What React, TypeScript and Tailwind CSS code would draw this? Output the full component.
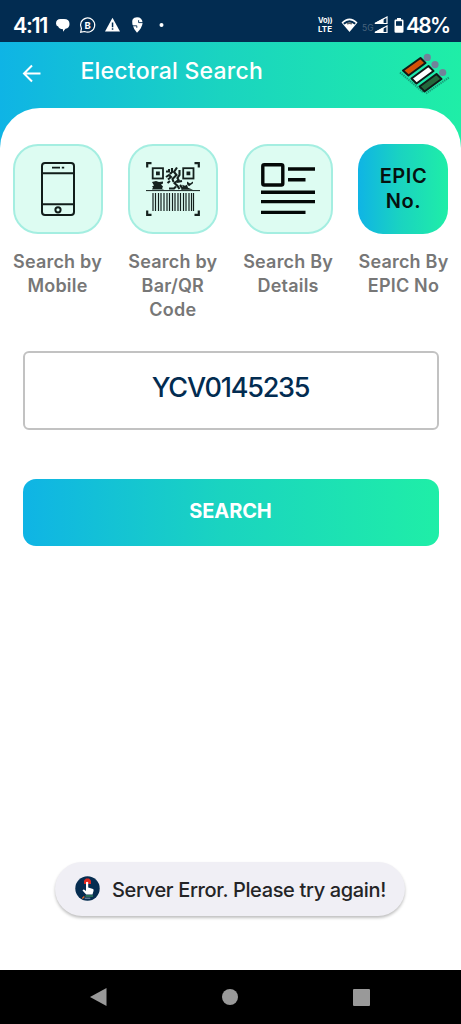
import React from 'react';

function Battery() {
  return (
    <svg width="10" height="15" viewBox="0 0 10 15">
      <path d="M3 0h4v1.5h1.2q1.3 0 1.3 1.3v10.7q0 1.3-1.3 1.3H1.8Q.5 14.8.5 13.5V2.8q0-1.3 1.3-1.3H3z" fill="white" />
      <path d="M2 3.2h6v4.6H2z" fill="#022c51" />
    </svg>
  );
}

function StatusBar() {
  return (
    <div className="flex h-[42px] shrink-0 items-start justify-between bg-[#022c51] pl-[13px] pr-[12px] pt-[15px] text-white">
      <div className="flex h-[20px] items-center">
        <span className="mt-px w-[43px] whitespace-nowrap text-[21.5px] font-semibold leading-none tracking-[-1.3px]">4:11</span>
        <svg className="-mt-px" width="109" height="20" viewBox="0 0 109 20" fill="white">
          {/* chat */}
          <path d="M0 8.5Q0 4 4.5 4H8q5.5 0 5.5 5 0 4-4 4.8L7 16.8v-2.5Q3.2 14 2.2 11.4 0 11 0 8.5z" />
          {/* business */}
          <path d="M24.7 17.2l.7-3.7a7.1 7.1 0 1 1 3.2 3z" fill="none" stroke="white" strokeWidth="1.2" />
          <text x="31.6" y="13.6" fontSize="9.5" fontWeight="700" textAnchor="middle">B</text>
          {/* warning */}
          <path d="M56.5 2.8L64 16.5H49z" />
          <path d="M55.8 7.5h1.5v4.8h-1.5zM55.8 13.3h1.5v1.5h-1.5z" fill="#022c51" />
          {/* delivery */}
          <path d="M81 17.8q-3.5-4-4.6-8.6Q75 2.2 81 2.2q5.3 0 5.6 5.8-.5 5-5.6 9.8z" />
          <path d="M87 7.6h-4.4V5.2M76 10.8h4.8v2" fill="none" stroke="#022c51" strokeWidth=".9" />
          <circle cx="105.5" cy="10" r="2" />
        </svg>
      </div>
      <div className="flex h-[20px] items-center">
        <div className="flex w-[23px] flex-col text-[8px] font-bold leading-[8px]">
          <span className="whitespace-nowrap text-[7.5px] tracking-[-0.2px]">Vo))</span>
          <span>LTE</span>
        </div>
        <svg width="17" height="15" viewBox="0 0 17 15">
          <path d="M.5 4.5Q8.5-3.5 16.5 4.5L8.5 14z" fill="white" />
          <path d="M2.2 4.9Q8.5-.6 14.8 4.9l-1.2 1.6Q8.5 2.4 3.4 6.5z" fill="#022c51" />
          <path d="M6 6q2.5-1.6 5 0" fill="none" stroke="#666" strokeWidth="1.4" />
        </svg>
        <span className="ml-[4px] mt-[7px] w-[12px] text-[8.5px] leading-none text-[#49647d]">5G</span>
        <svg width="14" height="18" viewBox="0 0 14 18" fill="none" stroke="white" strokeWidth="1.2">
          <path d="M1 7.5L13 1v6.5z" />
          <path d="M1 7.5L9 3.3v4.2z" fill="white" />
          <path d="M1 16.5L13 10v6.5z" />
          <path d="M1 16.5L9 12.3v4.2z" fill="white" />
        </svg>
        <div className="ml-[6px]"><Battery /></div>
        <span className="ml-[2px] w-[43px] whitespace-nowrap text-[21px] font-semibold leading-none tracking-[-1.7px]">48%</span>
      </div>
    </div>
  );
}

function VoteLogo() {
  return (
    <svg width="52" height="42" viewBox="0 0 52 42">
      <g fill="#71839a">
        <circle cx="28.3" cy="4.4" r="3.6" />
        <circle cx="36" cy="11.6" r="3.6" />
        <circle cx="43.7" cy="19.5" r="3.6" />
      </g>
      <g stroke="#101a18" strokeWidth="2" strokeLinejoin="round">
        <path d="M4 17.5L21.5 5L26.5 10L9.5 22.5z" fill="#d35108" />
        <path d="M12.5 25.5L29.5 13L34.5 18L17.5 30.5z" fill="#fff" />
        <path d="M20.5 33.5L37.5 21L42.5 26L25.5 38.5z" fill="#23683c" />
      </g>
      <path d="M1 19.5L24 39M27 40.5L50 24.5" stroke="#157c62" strokeWidth="2" strokeDasharray="1.4 .8" opacity=".7" fill="none" />
    </svg>
  );
}

function MobileIcon() {
  return (
    <svg width="34" height="54" viewBox="0 0 34 54" fill="none" stroke="#111d1a" strokeWidth="2">
      <rect x="1" y="1" width="32" height="52" rx="3" />
      <path d="M1 11.2h32M1 42.3h32" />
      <path d="M11 5.6h8M20.8 5.6h2.4" strokeWidth="1.8" />
      <circle cx="17" cy="47.8" r="2.6" />
    </svg>
  );
}

function ScanIcon() {
  return (
    <svg width="54" height="54" viewBox="0 0 54 54" fill="none" stroke="#15211e">
      <path d="M1.2 5.5V1.2H5.5M48.5 1.2h4.3V5.5M1.2 48.5v4.3H5.5M48.5 52.8h4.3V48.5" strokeWidth="2.2" />
      <rect x="6.7" y="6.2" width="10.3" height="10.3" strokeWidth="1.8" />
      <rect x="37.2" y="6.2" width="10.3" height="10.3" strokeWidth="1.8" />
      <path d="M10 9.5h3.8v3.8H10zM40.5 9.5h3.8v3.8h-3.8z" fill="#15211e" stroke="none" />
      <path
        d="M20 9.5h3V7M20 15l3-2 2 2-3 2.5M26 6v4l-2 2M31 5.5l-3 4.5 2.5 3-4 4 1 3M33.5 8v5l-2 3 1 2-4 3 3 3 2 3M31 20l5-1M24 19l-2.5 2M23 26.5h5l2-2M34 23l3 4"
        strokeWidth="2.1"
      />
      <path d="M6 20l4-1 3 1 4-.5v2l-2 1 2 2-1 2 2 1H6l1-2-1-1 2-1zM35 27.7l2-3-1-2 3 1 2-1 1 3 5 2zM41 19.5l3 2 3-2v1.8l-4 3-2-2z" fill="#15211e" stroke="none" />
      <path d="M0 28.6h54" strokeWidth="1" />
      <path
        d="M7 31v18M9.5 31v18M12.5 31v18M15 31v18M18 31v18M21 31v18M23.5 31v18M26.5 31v18M29 31v18M32 31v18M34.5 31v18M37.5 31v18M40 31v18M43 31v18M45.5 31v18M47.5 31v18"
        strokeWidth="1.2"
      />
    </svg>
  );
}

function DetailsIcon() {
  return (
    <svg width="54" height="52" viewBox="0 0 54 52" fill="none" stroke="#030807" strokeWidth="3.4">
      <rect x="1.8" y="1.8" width="20" height="20.2" rx="1.5" />
      <path d="M27 6h27M27 16.8h17.5M0 29.3h54M0 38.6h54M0 49.4h44.5" />
    </svg>
  );
}

const options = [
  { lines: ['Search by', 'Mobile'], icon: <MobileIcon /> },
  { lines: ['Search by', 'Bar/QR', 'Code'], icon: <ScanIcon /> },
  { lines: ['Search By', 'Details'], icon: <DetailsIcon /> },
  { lines: ['Search By', 'EPIC No'], icon: null },
];

export default function App() {
  return (
    <div className="flex h-[1024px] w-[461px] flex-col overflow-hidden bg-white font-['Inter',sans-serif]">
      <StatusBar />

      <div className="h-[928px] shrink-0 bg-[linear-gradient(90deg,#0fb4e5_0%,#1ad4c0_48%,#1feea7_100%)]">
        {/* Header */}
        <header className="flex h-[66px] items-start pl-[22px] pr-[10px]">
          <svg className="mt-[22px]" width="20" height="19" viewBox="0 0 20 19" fill="none" stroke="white" strokeWidth="2">
            <path d="M10 1.5L2 9.5l8 8M2 9.5h16.5" />
          </svg>
          <h1 className="ml-[38.5px] mt-[14px] whitespace-nowrap text-[23px] font-medium leading-[30px] tracking-[0.22px] text-white">
            Electoral Search
          </h1>
          <div className="ml-auto mt-[11px]"><VoteLogo /></div>
        </header>

        {/* Content */}
        <main className="flex h-[862px] flex-col rounded-t-[40px] bg-white">
          <div className="flex justify-between pl-[12.5px] pr-[12.5px] pt-[35.5px]">
            {options.map((option, i) => (
              <div key={i} className="flex w-[90px] flex-col items-center">
                {option.icon ? (
                  <div className="flex h-[90px] w-[90px] items-center justify-center rounded-[25px] border-2 border-[#a4eee1] bg-[#ddfcf2]">
                    {option.icon}
                  </div>
                ) : (
                  <div className="flex h-[90px] w-[90px] flex-col items-center justify-center rounded-[25px] bg-[linear-gradient(90deg,#0fb4e5,#1ad4c0_48%,#1feea7)] pt-px text-[20px] font-semibold leading-[25px] tracking-[0.6px] text-[#06110f]">
                    <span>EPIC</span>
                    <span>No.</span>
                  </div>
                )}
                <div className="mt-[16px] flex flex-col items-center whitespace-nowrap text-[18px] font-semibold leading-[24.4px] tracking-[0.2px] text-[#777]">
                  {option.lines.map((line) => (
                    <span key={line}>{line}</span>
                  ))}
                </div>
              </div>
            ))}
          </div>

          <div className="mx-[22.5px] mt-[28.5px] flex h-[79px] shrink-0 items-center justify-center rounded-[6px] border-2 border-[#c2c2c2] pb-[5px] text-[27px] font-medium tracking-[-1.2px] text-[#022c51]">
            YCV0145235
          </div>

          <button className="mx-[22.5px] mt-[48.5px] h-[67.5px] shrink-0 rounded-[13px] bg-[linear-gradient(90deg,#0fb4e5,#1ad4c0_48%,#1feea7)] pb-[3px] text-[20px] font-bold tracking-[-0.1px] text-white">
            SEARCH
          </button>

          {/* Toast */}
          <div className="ml-[55px] mt-auto mb-[54px] flex h-[54px] w-[350px] items-center rounded-full bg-[#f0eff5] pl-[20px] shadow-[0_2px_3px_rgba(0,0,0,0.25)]">
            <svg width="25" height="26" viewBox="0 0 25 26">
              <circle cx="12.5" cy="12.5" r="12.2" fill="#062d50" />
              <path d="M9 8V4.5l2-2h3l2 2V8z" fill="#df2920" />
              <path d="M11 6.3q1-1.3 2.2 0v5.2l4.8 1.5q1 .5.5 2L17.5 18.5h-6.3l-3.7-4q1-1.5 2.2-.6l1.3 1.1z" fill="white" />
              <path d="M10.5 20h7.5" stroke="#32805b" strokeWidth="1.5" />
              <path d="M7.3 22.5l2-2" stroke="#e26a2d" strokeWidth="1.2" />
              <path d="M9.8 22.2h5.5" stroke="#8298ab" strokeWidth="1" />
            </svg>
            <span className="ml-[12px] mt-[2px] whitespace-nowrap text-[20px] font-medium tracking-[-0.35px] text-[#242426]">
              Server Error. Please try again!
            </span>
          </div>
        </main>
      </div>

      {/* Navigation buttons */}
      <nav className="flex h-[54px] shrink-0 items-center justify-between bg-black pl-[90px] pr-[91px]">
        <svg width="17" height="18" viewBox="0 0 17 18" fill="#999"><path d="M0 9L16.5 0v18z" /></svg>
        <div className="h-[16px] w-[16px] rounded-full bg-[#999]" />
        <div className="h-[17px] w-[17px] rounded-[1px] bg-[#999]" />
      </nav>
    </div>
  );
}
